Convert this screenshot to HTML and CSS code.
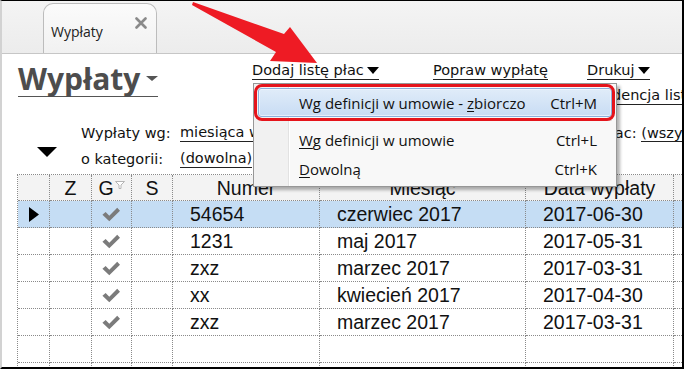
FILE: index.html
```html
<!DOCTYPE html>
<html lang="pl">
<head>
<meta charset="utf-8">
<title>Wypłaty</title>
<link rel="stylesheet" href="styles.css">
</head>
<body>
<div class="frame">
  <div class="tabbar">
    <div class="tab">
      <span class="tab-label">Wypłaty</span>
      <svg class="tab-close" viewBox="0 0 12 12"><path d="M1.5 1.5 L10.5 10.5 M10.5 1.5 L1.5 10.5" stroke="#8a8a8a" stroke-width="2.6" stroke-linecap="round"/></svg>
    </div>
  </div>
  <div class="main">
    <div class="head">
      <div class="title"><span>Wypłaty</span><i class="title-caret"></i></div>
      <a class="link r1 c2">Dodaj listę płac<i class="caret"></i></a>
      <a class="link r1 c3">Popraw wypłatę</a>
      <a class="link r1 c4">Drukuj<i class="caret"></i></a>
      <a class="link r2 c4">Ewidencja list płac</a>
    </div>
    <div class="filters">
      <span class="lbl f1">Wypłaty wg:</span>
      <a class="val f1">miesiąca wypłaty</a>
      <span class="right f1">Listy płac: <a class="val">(wszystkie)</a></span>
      <span class="collapse"><i class="tri-down"></i></span>
      <span class="lbl f2">o kategorii:</span>
      <a class="val f2">(dowolna)</a>
    </div>
    <div class="grid">
      <div class="row hdr">
        <div class="c"></div>
        <div class="c ctr">Z</div>
        <div class="c ctr">G<svg class="funnel" viewBox="0 0 10 8"><path d="M0.5 0.5 H9.5 L6 4 V7.5 H4 V4 Z" fill="#fff" stroke="#b5b5b5"/></svg></div>
        <div class="c ctr">S</div>
        <div class="c ctr">Numer</div>
        <div class="c ctr">Miesiąc</div>
        <div class="c ctr">Data wypłaty</div>
        <div class="c"></div>
      </div>
      <div class="row sel">
        <div class="c ind"><svg class="ptr" viewBox="0 0 10 15"><path d="M0 0 L10 7.5 L0 15 Z" fill="#000"/></svg></div>
        <div class="c"></div>
        <div class="c ctr"><svg class="chk" viewBox="0 0 18 14"><path d="M1 7.2 L4 4.6 L7.4 8.2 L14.8 0.8 L17.4 3.4 L7.4 13.2 Z" fill="#7b7b7b"/></svg></div>
        <div class="c"></div>
        <div class="c txt">54654</div>
        <div class="c txt">czerwiec 2017</div>
        <div class="c txt">2017-06-30</div>
        <div class="c"></div>
      </div>
      <div class="row">
        <div class="c"></div>
        <div class="c"></div>
        <div class="c ctr"><svg class="chk" viewBox="0 0 18 14"><path d="M1 7.2 L4 4.6 L7.4 8.2 L14.8 0.8 L17.4 3.4 L7.4 13.2 Z" fill="#7b7b7b"/></svg></div>
        <div class="c"></div>
        <div class="c txt">1231</div>
        <div class="c txt">maj 2017</div>
        <div class="c txt">2017-05-31</div>
        <div class="c"></div>
      </div>
      <div class="row">
        <div class="c"></div>
        <div class="c"></div>
        <div class="c ctr"><svg class="chk" viewBox="0 0 18 14"><path d="M1 7.2 L4 4.6 L7.4 8.2 L14.8 0.8 L17.4 3.4 L7.4 13.2 Z" fill="#7b7b7b"/></svg></div>
        <div class="c"></div>
        <div class="c txt">zxz</div>
        <div class="c txt">marzec 2017</div>
        <div class="c txt">2017-03-31</div>
        <div class="c"></div>
      </div>
      <div class="row">
        <div class="c"></div>
        <div class="c"></div>
        <div class="c ctr"><svg class="chk" viewBox="0 0 18 14"><path d="M1 7.2 L4 4.6 L7.4 8.2 L14.8 0.8 L17.4 3.4 L7.4 13.2 Z" fill="#7b7b7b"/></svg></div>
        <div class="c"></div>
        <div class="c txt">xx</div>
        <div class="c txt">kwiecień 2017</div>
        <div class="c txt">2017-04-30</div>
        <div class="c"></div>
      </div>
      <div class="row">
        <div class="c"></div>
        <div class="c"></div>
        <div class="c ctr"><svg class="chk" viewBox="0 0 18 14"><path d="M1 7.2 L4 4.6 L7.4 8.2 L14.8 0.8 L17.4 3.4 L7.4 13.2 Z" fill="#7b7b7b"/></svg></div>
        <div class="c"></div>
        <div class="c txt">zxz</div>
        <div class="c txt">marzec 2017</div>
        <div class="c txt">2017-03-31</div>
        <div class="c"></div>
      </div>
      <div class="row">
        <div class="c"></div><div class="c"></div><div class="c"></div><div class="c"></div>
        <div class="c"></div><div class="c"></div><div class="c"></div><div class="c"></div>
      </div>
      <div class="row">
        <div class="c"></div><div class="c"></div><div class="c"></div><div class="c"></div>
        <div class="c"></div><div class="c"></div><div class="c"></div><div class="c"></div>
      </div>
    </div>
  </div>
</div>

<div class="menu">
  <div class="item hot"><span>Wg definicji w umowie - <u>z</u>biorczo</span><span>Ctrl+M</span></div>
  <div class="sep"></div>
  <div class="item"><span><u>W</u>g definicji w umowie</span><span>Ctrl+L</span></div>
  <div class="item"><span><u>D</u>owolną</span><span>Ctrl+K</span></div>
</div>
<div class="callout"></div>
<svg class="arrow" viewBox="0 0 684 369"><polygon points="193,2 284,34 290,27 317,63 270,61 276,52 192,5" fill="#ee1b24"/></svg>
</body>
</html>
```

FILE: styles.css
```css
* { box-sizing: border-box; }
html, body { margin: 0; padding: 0; }
body {
  width: 684px;
  height: 369px;
  overflow: hidden;
  position: relative;
  background: #fff;
  font-family: "DejaVu Sans", sans-serif;
  color: #111;
}
.frame {
  width: 684px;
  height: 369px;
  border-top: 1px solid #000;
  border-right: 2px solid #000;
  border-bottom: 2px solid #000;
  border-left: 2px solid #d2d2d2;
  display: flex;
  flex-direction: column;
  overflow: hidden;
}

/* tab bar */
.tabbar {
  flex: none;
  height: 53px;
  background: linear-gradient(#f4f4f4, #ececec);
  border-bottom: 1px solid #c6c6c6;
  display: flex;
  align-items: flex-end;
  padding-left: 41px;
}
.tab {
  width: 114px;
  height: 50px;
  border: 1px solid #bcbcbc;
  border-bottom: 0;
  border-radius: 10px 10px 0 0;
  background: linear-gradient(#fbfbfb, #f1f1f1);
  display: flex;
  justify-content: space-between;
  align-items: flex-start;
  padding: 13px 9px 0 7px;
}
.tab-label {
  font: 14px/16px "Open Sans", sans-serif;
  color: #222;
  margin-top: 7px;
}
.tab-close { width: 12px; height: 12px; }

/* main */
.main { flex: 1; min-height: 0; display: flex; flex-direction: column; }
.head {
  display: grid;
  grid-template-columns: 234px 181px 154px 1fr;
  grid-template-rows: 25px 18px;
  padding-left: 16px;
  margin-top: 7px;
}
.title {
  grid-row: 1 / 3;
  grid-column: 1;
  justify-self: start;
  align-self: start;
  display: flex;
  align-items: flex-start;
  font: 700 30px/35px "Open Sans", sans-serif;
  color: #4d4d4d;
  border-bottom: 1.5px solid #555;
}
.title-caret {
  width: 0; height: 0;
  margin: 15px 0 0 6px;
  border-left: 6px solid transparent;
  border-right: 6px solid transparent;
  border-top: 5px solid #555;
}
.link {
  justify-self: start;
  align-self: start;
  display: inline-flex;
  align-items: center;
  white-space: nowrap;
  font-size: 14.5px;
  line-height: 17px;
  color: #111;
  border-bottom: 1px solid #222;
  margin-top: 1px;
}
.r1 { grid-row: 1; }
.r2 { grid-row: 2; }
.c2 { grid-column: 2; }
.c3 { grid-column: 3; }
.c4 { grid-column: 4; }
.caret {
  width: 0; height: 0;
  margin-left: 3px;
  border-left: 6px solid transparent;
  border-right: 6px solid transparent;
  border-top: 7px solid #000;
}

.filters {
  display: grid;
  grid-template-columns: 79px 99px 383px 1fr;
  grid-template-rows: 18px 18px;
  row-gap: 8px;
  margin-top: 20px;
  font-size: 14.5px;
  line-height: 18px;
  white-space: nowrap;
}
.f1 { grid-row: 1; }
.f2 { grid-row: 2; }
.lbl { grid-column: 2; }
.filters .val { justify-self: start; color: #111; border-bottom: 1px solid #222; line-height: 17px; }
.filters > .val { grid-column: 3; }
.right { grid-column: 4; }
.collapse { grid-column: 1; grid-row: 2; padding-left: 35px; margin-top: -3px; }
.tri-down {
  display: block;
  width: 0; height: 0;
  border-left: 10px solid transparent;
  border-right: 10px solid transparent;
  border-top: 10px solid #000;
}

/* grid */
.grid {
  margin: 6px 0 0 15px;
  border-left: 1px dotted #8a8a8a;
  border-top: 1px dotted #8a8a8a;
  font-family: "Liberation Sans", Arial, sans-serif;
  font-size: 19.5px;
  color: #111;
}
.row {
  display: grid;
  grid-template-columns: 32px 42px 40px 41px 147px 206px 148px 60px;
  height: 27px;
}
.row.hdr { height: 26px; background: #f3f3f3; }
.row.sel { background: #c5ddf4; }
.c {
  border-right: 1px dotted #8a8a8a;
  border-bottom: 1px dotted #8a8a8a;
  display: flex;
  align-items: center;
  white-space: nowrap;
  overflow: hidden;
}
.ctr { justify-content: center; }
.txt { padding-left: 17px; padding-top: 1px; }
.hdr .c { padding-top: 2px; }
.ind { justify-content: center; }
.ptr { width: 10px; height: 15px; margin-left: 1px; }
.chk { width: 20px; height: 15px; margin-left: -2px; }
.funnel { width: 10px; height: 8px; margin: -8px 0 0 1px; }

/* dropdown menu */
.menu {
  position: absolute;
  left: 253px;
  top: 83px;
  width: 364px;
  height: 104px;
  border: 1px solid #979797;
  background: linear-gradient(to right, #f1f1f1 0 34px, #e2e2e2 34px 35px, #fff 35px 36px, #f8f8f8 36px);
  box-shadow: 3px 3px 3px rgba(0, 0, 0, 0.3);
  padding: 4px 4px 0 4px;
  font: 15px "Open Sans", sans-serif;
  color: #111;
}
.item {
  height: 29px;
  display: flex;
  justify-content: space-between;
  align-items: center;
  padding: 0 14px 0 40px;
  border: 1px solid transparent;
  border-radius: 3px;
  white-space: nowrap;
}
.item.hot {
  border-color: #8cb0dc;
  background: linear-gradient(#e0ecf9, #c8dcf4);
  box-shadow: inset 0 0 0 1px rgba(255, 255, 255, 0.55);
}
.item u { text-underline-offset: 2px; }
.sep {
  height: 8px;
  margin-left: 31px;
  background: linear-gradient(#e0e0e0, #e0e0e0) 0 3px / 100% 1px no-repeat;
}
.callout {
  position: absolute;
  left: 254px;
  top: 84px;
  width: 361px;
  height: 37px;
  border: 3px solid #e5141b;
  border-radius: 8px;
}
.arrow {
  position: absolute;
  left: 0;
  top: 0;
  width: 684px;
  height: 369px;
  pointer-events: none;
}
```
